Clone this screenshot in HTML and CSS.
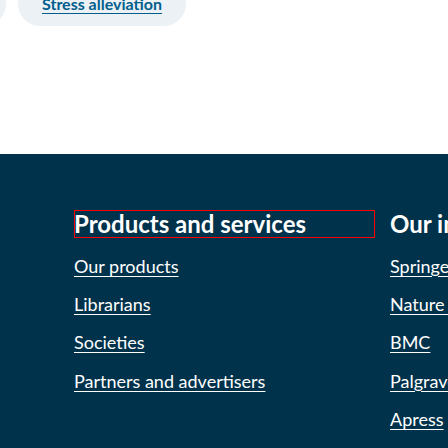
FILE: index.html
```html
<!DOCTYPE html>
<html lang="en">
<head>
<meta charset="utf-8">
<title>Footer</title>
<link rel="stylesheet" href="styles.css">
</head>
<body>
<div class="page">
  <div class="top">
    <div class="chips">
      <span class="chip chip-prev"><a href="#">Anxiety</a></span>
      <span class="chip"><a href="#">Stress alleviation</a></span>
    </div>
  </div>
  <footer class="footer">
    <div class="col">
      <h2 class="col-title focused">Products and services</h2>
      <ul class="links">
        <li><a href="#">Our products</a></li>
        <li><a href="#">Librarians</a></li>
        <li><a href="#">Societies</a></li>
        <li><a href="#">Partners and advertisers</a></li>
      </ul>
    </div>
    <div class="col">
      <h2 class="col-title">Our imprints</h2>
      <ul class="links">
        <li><a href="#">Springer</a></li>
        <li><a href="#">Nature Portfolio</a></li>
        <li><a href="#">BMC</a></li>
        <li><a href="#">Palgrave Macmillan</a></li>
        <li><a href="#">Apress</a></li>
      </ul>
    </div>
  </footer>
</div>
</body>
</html>
```

FILE: styles.css
```css
html, body {
  margin: 0;
  padding: 0;
}
body {
  font-family: Lato, "Open Sans", sans-serif;
  background: #ffffff;
}
.page {
  width: 448px;
  height: 448px;
  overflow: hidden;
}
.top {
  height: 154px;
  overflow: hidden;
}
.chips {
  display: flex;
  gap: 12px;
  margin-left: -94px;
  margin-top: -18px;
}
.chip {
  flex: none;
  background: #ebf1f5;
  border-radius: 999px;
  padding: 10px 24px;
  font-size: 16px;
  line-height: 24px;
  font-weight: 700;
  white-space: nowrap;
}
.chip-prev {
  width: 52px;
  overflow: hidden;
}
.chip a {
  color: #025e8d;
  text-decoration: underline;
  text-decoration-thickness: 1px;
  text-underline-offset: 3px;
}
.footer {
  background: #01324b;
  height: 294px;
  box-sizing: border-box;
  padding: 56px 0 0 74px;
  display: grid;
  grid-template-columns: 301px 301px;
  column-gap: 15px;
  overflow: hidden;
}
.col-title {
  margin: 0 0 8.6px;
  color: #ffffff;
  font-size: 24px;
  line-height: 28px;
  font-weight: 700;
  white-space: nowrap;
}
.focused {
  outline: 1px solid #ff0000;
  outline-offset: -1px;
}
.links {
  list-style: none;
  margin: 0;
  padding: 0;
}
.links li {
  height: 38.33px;
  line-height: 38.33px;
  font-size: 18px;
  white-space: nowrap;
}
.links a {
  color: #ffffff;
  text-decoration: underline;
  text-decoration-thickness: 1px;
  text-underline-offset: 3px;
}
```
